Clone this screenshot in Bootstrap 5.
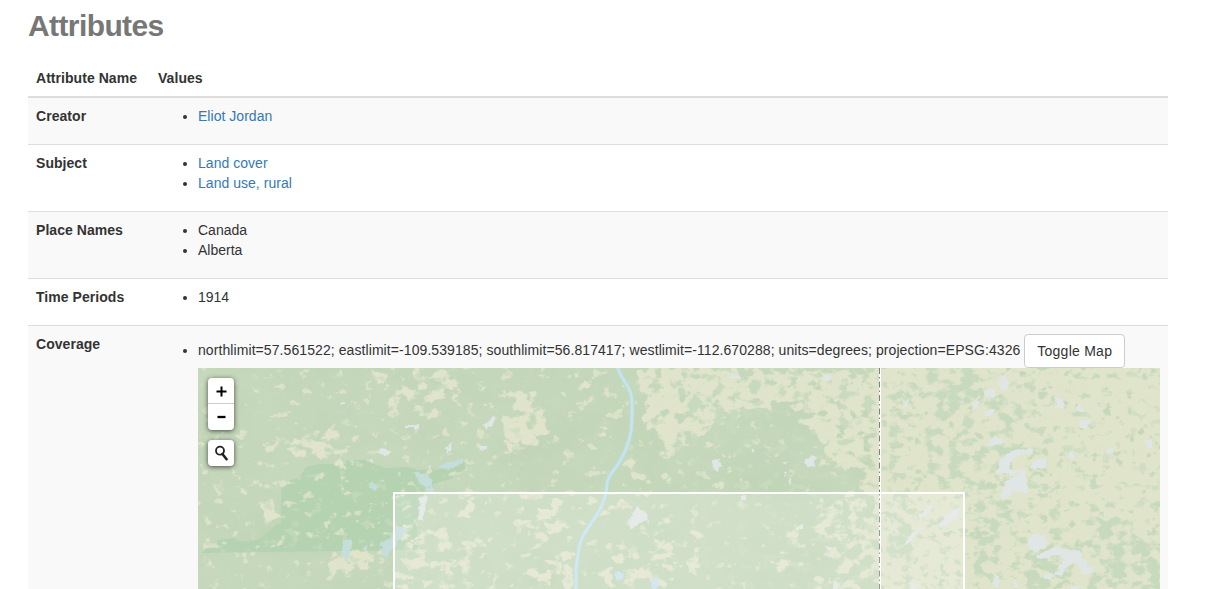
<!DOCTYPE html>
<html lang="en">
<head>
<meta charset="utf-8">
<meta name="viewport" content="width=device-width, initial-scale=1">
<title>Attributes</title>
<link href="https://cdn.jsdelivr.net/npm/bootstrap@5.3.0/dist/css/bootstrap.min.css" rel="stylesheet">
<style>
body{font:14px/20px "Liberation Sans",Arial,sans-serif;color:#333;overflow:hidden}
.page-wrap{width:1140px;height:589px;overflow:hidden;margin-left:28px;padding-top:9px}
h2{font-size:30px;line-height:33px;font-weight:700;color:#777;margin:0 0 18px;letter-spacing:-.6px}
.attr-table{--bs-table-color:#333;--bs-table-striped-color:#333;--bs-table-striped-bg:#f9f9f9;table-layout:fixed;border-color:#ddd;color:#333}
.attr-table>:not(caption)>*>*{padding:8px;border-bottom-width:0;border-top:1px solid #ddd;vertical-align:top}
.attr-table>thead>tr>th{border-top:0;border-bottom:2px solid #ddd}
.attr-table>tbody>tr:first-child>*{border-top:0}
.attr-table th{letter-spacing:.05px}
.attr-table th:first-child{width:122px;white-space:nowrap}
.attr-table ul{padding-left:40px;margin-bottom:10px}
.attr-table a{color:#337ab7;text-decoration:none;letter-spacing:.03px}
.coverage-text{letter-spacing:.081px}
.btn-toggle{--bs-btn-font-size:14px;--bs-btn-line-height:20px;--bs-btn-padding-y:6px;--bs-btn-padding-x:12px;--bs-btn-border-radius:4px;--bs-btn-color:#333;--bs-btn-bg:#fff;--bs-btn-border-color:#ccc;letter-spacing:.25px}
.map-box{height:221px;background:#c6d8ba}
.map-tools{top:10px;left:10px;width:26px;gap:10px}
.tool-set{background:#fff;border-radius:4px;box-shadow:0 1px 5px rgba(0,0,0,.65)}
.tool-set button{width:26px;height:26px;padding:0;border:0;background:none;display:block}
.tool-set .zoom-in{height:25px}
.tool-set .zoom-out{border-top:1px solid #ccc;height:27px}
.tool-set svg{display:block;margin:auto}
</style>
</head>
<body>
<main class="page-wrap">
<h2>Attributes</h2>
<table class="table table-striped attr-table">
<thead><tr><th>Attribute Name</th><th>Values</th></tr></thead>
<tbody>
<tr><th>Creator</th><td><ul><li><a href="#">Eliot Jordan</a></li></ul></td></tr>
<tr><th>Subject</th><td><ul><li><a href="#">Land cover</a></li><li><a href="#">Land use, rural</a></li></ul></td></tr>
<tr><th>Place Names</th><td><ul><li>Canada</li><li>Alberta</li></ul></td></tr>
<tr><th>Time Periods</th><td><ul><li>1914</li></ul></td></tr>
<tr><th>Coverage</th><td><ul><li><span class="coverage-text">northlimit=57.561522; eastlimit=-109.539185; southlimit=56.817417; westlimit=-112.670288; units=degrees; projection=EPSG:4326</span> <button type="button" class="btn btn-toggle">Toggle Map</button>
<div class="map-box position-relative overflow-hidden">
<svg class="d-block" width="962" height="221" viewBox="198 368 962 221" aria-label="Map">
<defs>
<!-- source opacity plus noise, thresholded: opacity sets how dense the cover is -->
<filter id="scrub" filterUnits="userSpaceOnUse" x="198" y="368" width="962" height="221" color-interpolation-filters="sRGB">
<feGaussianBlur in="SourceGraphic" stdDeviation="3.5" result="b"/>
<feTurbulence type="fractalNoise" baseFrequency=".08 .1" numOctaves="5" seed="7"/>
<feColorMatrix values="0 0 0 0 0 0 0 0 0 0 0 0 0 0 0 0 0 0 2 -.5" result="n"/>
<feComposite in="b" in2="n" operator="arithmetic" k2=".5" k3=".5"/>
<feComponentTransfer result="m"><feFuncA type="linear" slope="8" intercept="-3.3"/></feComponentTransfer>
<feFlood flood-color="#dfe4cb"/><feComposite in2="m" operator="in"/>
</filter>
<filter id="forest" filterUnits="userSpaceOnUse" x="198" y="368" width="962" height="221" color-interpolation-filters="sRGB">
<feGaussianBlur in="SourceGraphic" stdDeviation="4" result="b"/>
<feTurbulence type="fractalNoise" baseFrequency=".08 .11" numOctaves="5" seed="23"/>
<feColorMatrix values="0 0 0 0 0 0 0 0 0 0 0 0 0 0 0 0 0 0 2.2 -.6" result="n"/>
<feComposite in="b" in2="n" operator="arithmetic" k2=".5" k3=".5"/>
<feComponentTransfer result="m"><feFuncA type="linear" slope="6" intercept="-2.4"/></feComponentTransfer>
<feFlood flood-color="#c8dabd"/><feComposite in2="m" operator="in"/>
</filter>
<filter id="shore" x="-5%" y="-5%" width="110%" height="110%"><feTurbulence type="fractalNoise" baseFrequency=".14" numOctaves="3" seed="4"/><feDisplacementMap in="SourceGraphic" scale="6" xChannelSelector="R" yChannelSelector="G"/></filter>
<filter id="relief" x="0" y="0" width="100%" height="100%" color-interpolation-filters="sRGB"><feTurbulence type="fractalNoise" baseFrequency=".012 .02" numOctaves="3" seed="9"/><feColorMatrix values="0 0 0 0 .72 0 0 0 0 .81 0 0 0 0 .69 0 0 0 .8 -.3"/></filter>
</defs>
<path fill="#c6d8bb" d="M198 368h962v221H198z"/>
<path filter="url(#relief)" d="M198 368h962v221H198z"/>
<path fill="#b5d3b1" d="M202 553l4-4 9-3 3-6 17-2 3 3h16l10-5 9-9 8-4v-35l8-7 11-4 6-10 13-3h27v-4h22l3 3 14 5 22-1 12 3 32-3 14-6v8l-15 10-25 8-8 36 1 27z"/>
<g filter="url(#scrub)">
<path fill-opacity=".04" d="M190 360h440v230H190z"/>
<path fill-opacity=".42" d="M370 374l14-4 8 18 24-2 4-14 30-8 2 28-8 14 4 12-18-6-20-8-24 2-5-14-10-4zM267 436l35 0 3-8 30 2 18 10-3 18-18 5-20-6-28 0-16-4zM220 482l20 2-2 12-12-2zM257 506l20-6 5 16-10 10-14-10zM198 432h16v14h-16z"/>
<path fill-opacity=".8" d="M330 557l18-6 26 2 1 14-20 6-24-2zM513 395l20 3 4 12-2 6 10 8 2 14-14 4-16 11-15-6 7-17-7-6 5-7 9 0z"/>
<path fill-opacity=".28" d="M575 368h10l3 22 12 14-20 0zM582 424l16 2 10 14-14-2zM590 453h10v10h-10zM625 457l10 0 6 14 12 20-10 6-10-14-10-8zM610 390l10 0 6 14-10 4zM655 462l18 20-14 8zM440 372l18 4-4 12-14 0zM458 400l20 2v6h-20zM700 445l18 0-4 18-8 4zM722 458l12-2-2 16-12 0zM706 482l14-6 2 16-14 2zM640 470l14 0 14 16-10 4-12-8z"/>
<path fill-opacity=".7" d="M636 366h50l80 4h117v125h-23l3-30-20 5-20-9-5-25-18-10-7-20-38-2-12 14-24 2-20 16-14 2-10 22-8-2-6-18-14-8-2-28z"/>
<path fill-opacity=".85" d="M878 366h290v230h-290z"/>
<path fill-opacity=".42" d="M820 496l60-4v98h-80l-5-6 30-8 4-20-16-26zM772 554l22-2 8 16-28 2zM784 520l14 2 2 24-12-2z"/>
<path fill-opacity=".38" d="M410 525l36 5 12 16-20 6-20 38h-20l4-28-8-24zM444 546l46-14 2 8-24 14 8 16-24 20h-14zM455 494l40 0-15 20-24 4zM518 494h42l10 38-35 18-12-30zM575 500l22-4-16 28-10-12zM528 560l46-8 2 38h-44zM600 504l28-8 4 12-24 8zM650 510l18-2 6 34-14 8zM602 548l40-10 50 24-20 26-70 2zM690 530l16 6-6 34-12-8z"/>
</g>
<g filter="url(#forest)">
<path fill-opacity=".5" d="M688 394l30 6-10 14-22-6zM740 384l14-4 2 12-20 6zM770 368h22v6h-22zM720 410l26-6 2 12-22 8zM932 368l38 0 16 12-6 20-20 4-16 22-16 2 12-30zM996 440l10-8 12-2-2 40-14 16-10-26zM985 395l16-4 6 20 30 8-30 8-16-8zM890 526l24 6-2 30-24-4zM1090 508l16-2 28 28 26-6v65h-74l14-20-6-26-6-10zM1028 544l24-6 26 10-10 30-24 14h-16zM968 566l14-10 6 14-20 8z"/>
<path fill-opacity=".3" d="M886 496l40-2-16 40-22 2zM1070 415l30-2-2 16-20 0zM1052 470l18 10-4 20-12-12zM1080 370l16 4-12 20zM1045 450l30 4 14 18-30-4zM892 380l26-4-4 70-22-16zM924 440l40-10 20 60-26 0-20-10zM970 500l40 0 8 40-30 20-16-20zM870 425l12 8-8 18-6-10z"/>
<path fill-opacity=".13" d="M690 368h370v221H690z"/>
</g>
<g fill="#e0e6e5" filter="url(#shore)">
<path d="M377 451l6-3 7 2 0 4-6 1zM368 458l5 1 1 4-4-1zM484 425l8-8 5 1-3 7-8 4zM446 448l5-5 2 8-7 2zM479 446h8l0 3-7 1zM339 401h5v3h-4zM405 425l14 0v3h-14zM630 517l8-9 8 5 3 8-9 2-10 7-2-5zM711 461l10-2 0 7-5 5zM806 460l6-6 5 4-4 8-7 1zM781 463l7-4-3 6zM784 473l5-2-4 5zM788 482l4-4-3 7zM751 449l4 0-1 4zM797 526l5-1v5h-5zM740 496h6v4h-6zM823 376l8 0v5h-8zM726 376h14l0 2h-12zM901 406l9-9-4 10-5 3z"/>
<path d="M1000 376l6 0 2 11-5 5-4-5zM984 392l10-4 1 8-9 2zM973 404l8-4-4 8-6 2zM986 411l9 0-5 5-6 0zM989 440l10-2 7 3-8 5-10-1zM997 472l3-12 12-9 18-3 3 4-17 4-9 10 4 5 10-3 3 4-14 4zM1031 463l8-4 9 1-2 7-13 2zM1001 496l5-16 14-5 5-6 2 16 0 8-12-2-8 8zM1055 396l6 5 5 3-3 5-7-2zM1080 419l10 3-2 7-8-2zM1077 405l5 0 0 6-5 0zM1145 440h8l-1 8-6-2zM1070 453l4-3 0 9-4 0zM1107 449h6v4h-6z"/>
<path d="M1027 538l8-5 10 3 1 9-8 7-9-3zM1036 556l20-9 22 4 8 11 7 10-8 2-10-12-8 5-5 9-7-2 9-15-8-4-16 5zM1045 573l9 0-3 7-6-2zM994 574l5 4-2 12-4-3zM1013 580l4 2 1 6-4 0zM1071 586h10v5h-10z"/>
<path d="M901 549l8-12 12-11 0 3-11 13zM919 515l9-8 6-1-5 7-8 6zM937 526l16-15 10-6-7 12-14 10zM419 498l9-1-3 10-3 13-4-1 2-12zM909 582l10 2-3 6-6 0zM826 546h6l-2 4-4-1zM833 582l8 3-3 5-5-2z"/>
</g>
<g fill="#c5dddb" filter="url(#shore)"><path d="M442 465l9-4 13-4-2 7-12 5-12-1zM412 472l14 2 7 6-3 7-8-1zM343 540l10 0-3 16-6 4-2-8zM380 543l10-3 6-14 10 2-2 8-8 6-8 16-6-3zM371 482l7 3-2 6-5-3zM364 545h4v5h-5zM427 488h6v5h-8z"/></g>
<path fill="none" stroke="#bddcc3" stroke-width="5.2" stroke-linejoin="round" d="M617 366c2 6 5 12 8 16 5 8 7 12 7 22v15c0 16-6 32-12 42-5 9-13 15-13 23-1 20-11 32-19 44-11 14-9 26-12 40v24"/>
<path fill="none" stroke="#c7e2f0" stroke-width="3" d="M617 366c2 6 5 12 8 16 5 8 7 12 7 22v15c0 16-6 32-12 42-5 9-13 15-13 23-1 20-11 32-19 44-11 14-9 26-12 40v24"/>
<path fill="#c8e0f0" d="M614 574l4-3 6 3-1 5-6 2zM652 579l6-1 0 8-3 4-4-3z"/>
<path fill="none" stroke="#c4ceac" d="M556 571l-4 6 0 12"/>
<path stroke="#fff" d="M880.5 368v221"/>
<path stroke="#fff" d="M879.5 368v221"/>
<path stroke="#7f8276" stroke-dasharray="6 3 1.5 3" d="M879.5 368v221"/>
<rect x="394" y="493" width="570" height="340" fill="#fff" fill-opacity=".2" stroke="#fff" stroke-width="2"/>
</svg>
<div class="map-tools position-absolute d-grid">
<div class="tool-set">
<button type="button" class="zoom-in" aria-label="Zoom in"><svg width="26" height="25"><path d="M13.5 8.5v10M8.5 13.5h10" stroke="#000" stroke-width="2"/></svg></button>
<button type="button" class="zoom-out" aria-label="Zoom out"><svg width="26" height="26"><path d="M9.5 13h8" stroke="#000" stroke-width="2.3"/></svg></button>
</div>
<div class="tool-set"><button type="button" aria-label="Search"><svg width="26" height="26" fill="none" stroke="#222"><circle cx="12" cy="10.7" r="4" stroke-width="1.8"/><path d="M14.4 14l4.2 5.2" stroke-width="2.6" stroke-linecap="round"/></svg></button></div>
</div>
</div>
</li></ul></td></tr>
</tbody>
</table>
</main>
<script src="https://cdn.jsdelivr.net/npm/bootstrap@5.3.0/dist/js/bootstrap.bundle.min.js"></script>
</body>
</html>
